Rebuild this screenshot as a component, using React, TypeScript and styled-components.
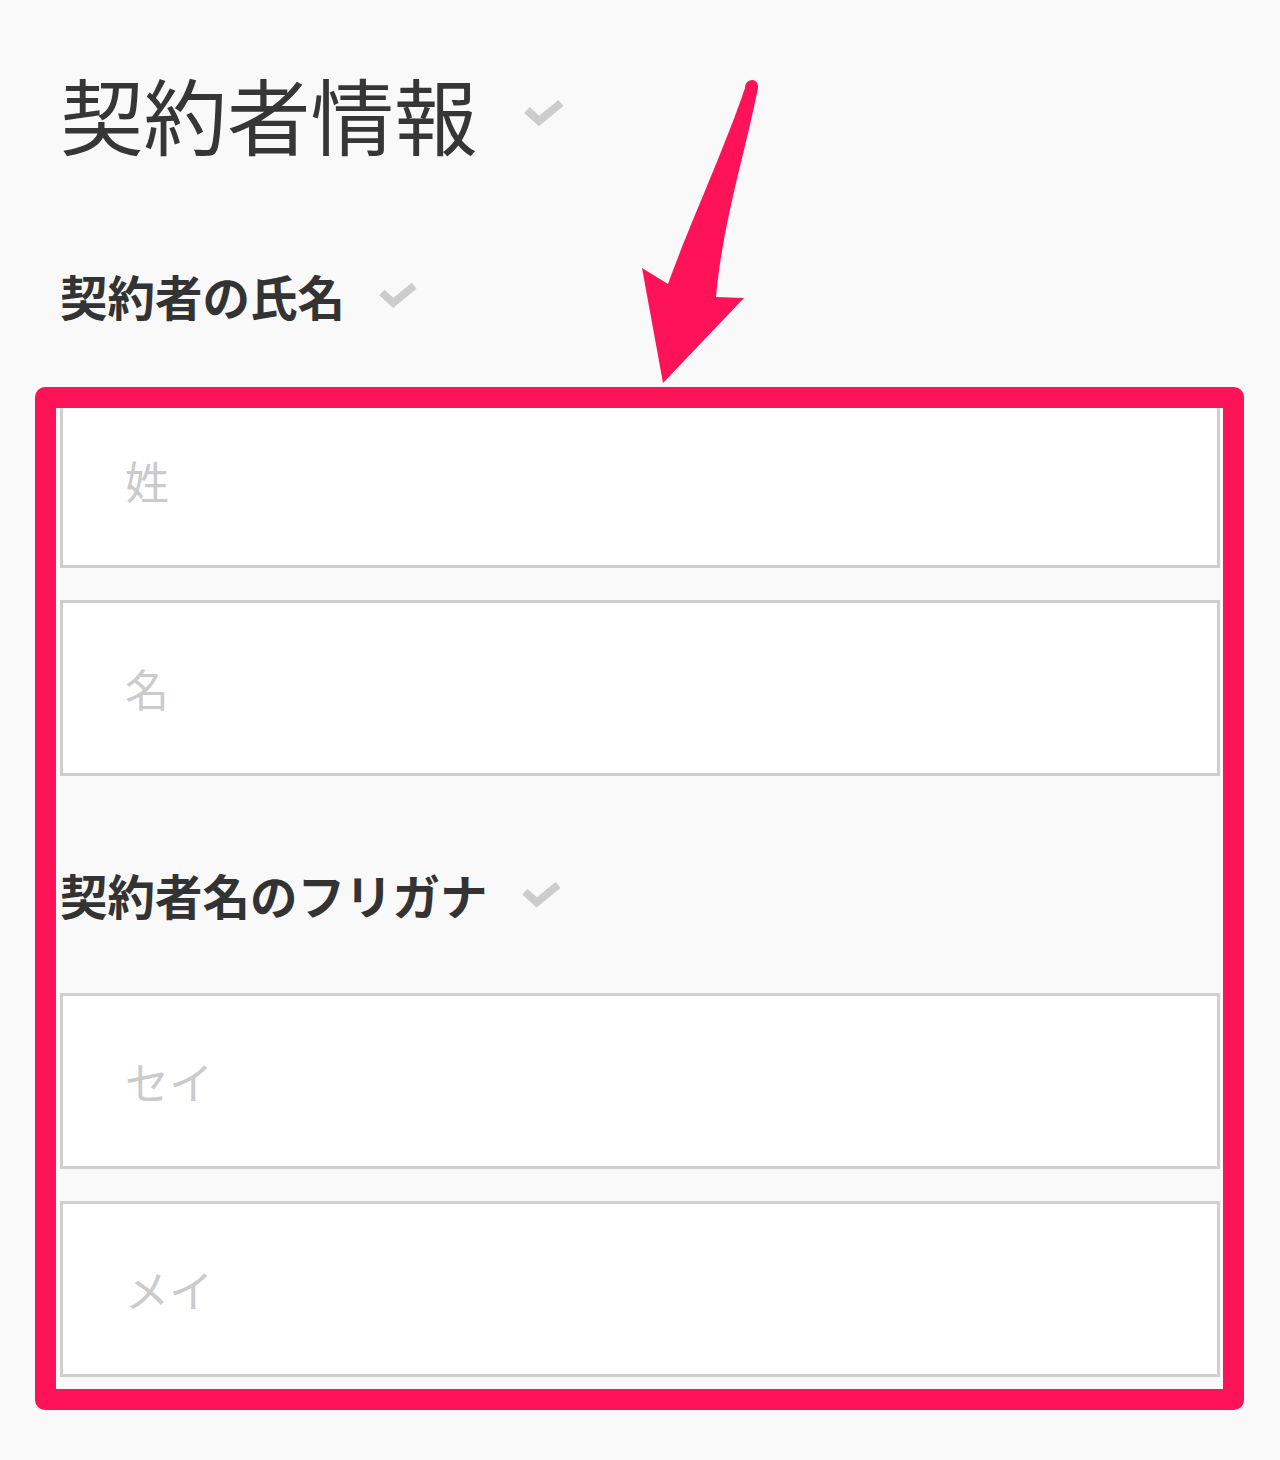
import React from 'react';
import styled, { createGlobalStyle } from 'styled-components';

const GlobalStyle = createGlobalStyle`
  html, body {
    margin: 0;
    padding: 0;
    background: #f9f9f9;
  }
  body {
    font-family: "Noto Sans CJK JP", "Noto Sans", sans-serif;
    color: #333333;
  }
`;

const Page = styled.div`
  position: relative;
  min-height: 1460px;
  box-sizing: border-box;
  padding: 71px 60px 0 60px;
  overflow: hidden;
`;

const TitleRow = styled.div`
  display: flex;
  align-items: center;
  gap: 46px;
`;

const Title = styled.h1`
  margin: 0;
  font-size: 83.5px;
  line-height: 1;
  font-weight: 400;
  color: #363636;
`;

const LabelRow = styled.div<{ top: number; bottom: number }>`
  display: flex;
  align-items: center;
  gap: 34px;
  margin-top: ${({ top }) => top}px;
  margin-bottom: ${({ bottom }) => bottom}px;
`;

const Label = styled.h2`
  margin: 0;
  font-size: 47.5px;
  line-height: 1;
  font-weight: 700;
  color: #333333;
`;

const Fields = styled.div`
  display: flex;
  flex-direction: column;
  gap: 32px;
`;

const TextInput = styled.input`
  display: block;
  box-sizing: border-box;
  width: 100%;
  height: 176px;
  margin: 0;
  padding: 0 0 0 62px;
  border: 3px solid #cfcfcf;
  border-radius: 0;
  background: #ffffff;
  font-family: "Noto Sans CJK JP", sans-serif;
  font-size: 44px;
  color: #333333;
  outline: none;

  &::placeholder {
    color: #cbcbcb;
  }
`;

const HighlightFrame = styled.div`
  position: absolute;
  left: 35px;
  top: 387px;
  width: 1209px;
  height: 1023px;
  box-sizing: border-box;
  border: 21px solid #ff1358;
  border-radius: 10px;
  pointer-events: none;
`;

const ArrowLayer = styled.svg`
  position: absolute;
  left: 0;
  top: 0;
  pointer-events: none;
`;

const CheckSvg = styled.svg<{ w: number }>`
  width: ${({ w }) => w}px;
  height: auto;
  flex: none;
`;

const Check = ({ w }: { w: number }) => (
  <CheckSvg w={w} viewBox="0 0 40 28">
    <path
      d="M3 11 L15 22 L37 4"
      fill="none"
      stroke="#cccccc"
      strokeWidth="8"
      strokeLinejoin="miter"
    />
  </CheckSvg>
);

const Arrow = () => (
  <ArrowLayer width="1280" height="420" viewBox="0 0 1280 420">
    <path
      d="M745 88
         C745 78 759 77 758 88
         C746 150 723 220 716 297
         L744 298
         L663 383
         L642 268
         L668 284
         C688 228 724 150 745 88 Z"
      fill="#ff1358"
    />
  </ArrowLayer>
);

export default function App() {
  return (
    <>
      <GlobalStyle />
      <Page>
        <TitleRow>
          <Title>契約者情報</Title>
          <Check w={40} />
        </TitleRow>

        <LabelRow top={117} bottom={73}>
          <Label>契約者の氏名</Label>
          <Check w={38} />
        </LabelRow>
        <Fields>
          <TextInput placeholder="姓" />
          <TextInput placeholder="名" />
        </Fields>

        <LabelRow top={95} bottom={74}>
          <Label>契約者名のフリガナ</Label>
          <Check w={39} />
        </LabelRow>
        <Fields>
          <TextInput placeholder="セイ" />
          <TextInput placeholder="メイ" />
        </Fields>

        <HighlightFrame />
        <Arrow />
      </Page>
    </>
  );
}
